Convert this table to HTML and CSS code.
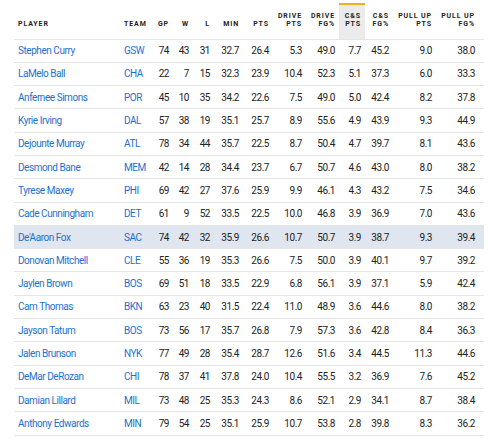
FILE: index.html
```html
<!DOCTYPE html>
<html lang="en">
<head>
    <meta charset="UTF-8">
    <meta name="viewport" content="width=device-width, initial-scale=1.0">
    <title>Shooting Splits</title>
    <link rel="stylesheet" href="styles.css">
</head>
<body>
    <div class="container">
        <table class="stats-table">
            <colgroup>
                <col class="c-player"><col class="c-team"><col class="c-gp"><col class="c-w"><col class="c-l">
                <col class="c-min"><col class="c-pts"><col class="c-dpts"><col class="c-dfg"><col class="c-cpts">
                <col class="c-cfg"><col class="c-pupts"><col class="c-pufg">
            </colgroup>
            <thead>
                <tr>
                    <th class="left">Player</th>
                    <th class="left">Team</th>
                    <th>GP</th>
                    <th>W</th>
                    <th>L</th>
                    <th>Min</th>
                    <th>Pts</th>
                    <th>Drive<br>Pts</th>
                    <th>Drive<br>FG%</th>
                    <th class="sorted">C&amp;S<br>Pts</th>
                    <th>C&amp;S<br>FG%</th>
                    <th>Pull Up<br>Pts</th>
                    <th>Pull Up<br>FG%</th>
                </tr>
            </thead>
            <tbody id="rows"></tbody>
        </table>
    </div>

    <script>
        const players = [
            ['Stephen Curry', 'GSW', 74, 43, 31, '32.7', '26.4', '5.3', '49.0', '7.7', '45.2', '9.0', '38.0'],
            ['LaMelo Ball', 'CHA', 22, 7, 15, '32.3', '23.9', '10.4', '52.3', '5.1', '37.3', '6.0', '33.3'],
            ['Anfernee Simons', 'POR', 45, 10, 35, '34.2', '22.6', '7.5', '49.0', '5.0', '42.4', '8.2', '37.8'],
            ['Kyrie Irving', 'DAL', 57, 38, 19, '35.1', '25.7', '8.9', '55.6', '4.9', '43.9', '9.3', '44.9'],
            ['Dejounte Murray', 'ATL', 78, 34, 44, '35.7', '22.5', '8.7', '50.4', '4.7', '39.7', '8.1', '43.6'],
            ['Desmond Bane', 'MEM', 42, 14, 28, '34.4', '23.7', '6.7', '50.7', '4.6', '43.0', '8.0', '38.2'],
            ['Tyrese Maxey', 'PHI', 69, 42, 27, '37.6', '25.9', '9.9', '46.1', '4.3', '43.2', '7.5', '34.6'],
            ['Cade Cunningham', 'DET', 61, 9, 52, '33.5', '22.5', '10.0', '46.8', '3.9', '36.9', '7.0', '43.6'],
            ['De\'Aaron Fox', 'SAC', 74, 42, 32, '35.9', '26.6', '10.7', '50.7', '3.9', '38.7', '9.3', '39.4'],
            ['Donovan Mitchell', 'CLE', 55, 36, 19, '35.3', '26.6', '7.5', '50.0', '3.9', '40.1', '9.7', '39.2'],
            ['Jaylen Brown', 'BOS', 69, 51, 18, '33.5', '22.9', '6.8', '56.1', '3.9', '37.1', '5.9', '42.4'],
            ['Cam Thomas', 'BKN', 63, 23, 40, '31.5', '22.4', '11.0', '48.9', '3.6', '44.6', '8.0', '38.2'],
            ['Jayson Tatum', 'BOS', 73, 56, 17, '35.7', '26.8', '7.9', '57.3', '3.6', '42.8', '8.4', '36.3'],
            ['Jalen Brunson', 'NYK', 77, 49, 28, '35.4', '28.7', '12.6', '51.6', '3.4', '44.5', '11.3', '44.6'],
            ['DeMar DeRozan', 'CHI', 78, 37, 41, '37.8', '24.0', '10.4', '55.5', '3.2', '36.9', '7.6', '45.2'],
            ['Damian Lillard', 'MIL', 73, 48, 25, '35.3', '24.3', '8.6', '52.1', '2.9', '34.1', '8.7', '38.4'],
            ['Anthony Edwards', 'MIN', 79, 54, 25, '35.1', '25.9', '10.7', '53.8', '2.8', '39.8', '8.3', '36.2']
        ];

        const tbody = document.getElementById('rows');
        players.forEach(p => {
            const tr = document.createElement('tr');
            if (p[0] === 'De\'Aaron Fox') tr.className = 'highlight';
            p.forEach((val, i) => {
                const td = document.createElement('td');
                if (i < 2) {
                    td.className = 'left';
                    td.innerHTML = `<a href="#">${val}</a>`;
                } else {
                    td.textContent = val;
                }
                tr.appendChild(td);
            });
            tbody.appendChild(tr);
        });
    </script>
</body>
</html>
```

FILE: styles.css
```css
body {
    margin: 0;
    background: #fff;
    font-family: "Roboto", "Liberation Sans", sans-serif;
    color: #222;
}
.container {
    padding: 3px 5px 0 14px;
}
.stats-table {
    width: 470px;
    table-layout: fixed;
    border-collapse: collapse;
}
.c-player { width: 106px; }
.c-team { width: 30px; }
.c-gp { width: 23px; }
.c-w { width: 20px; }
.c-l { width: 21px; }
.c-min { width: 29px; }
.c-pts { width: 30px; }
.c-dpts { width: 33px; }
.c-dfg { width: 33px; }
.c-cpts { width: 26px; }
.c-cfg { width: 28px; }
.c-pupts { width: 43px; }
.c-pufg { width: 48px; }

.stats-table th {
    height: 35px;
    box-sizing: border-box;
    padding: 0 4px 11px 0;
    vertical-align: bottom;
    text-align: right;
    font-size: 7px;
    line-height: 8px;
    font-weight: 700;
    letter-spacing: 0.9px;
    text-transform: uppercase;
    color: #222;
    border-bottom: 1px solid #e4e4e4;
    border-top: 2px solid transparent;
}
.stats-table th.sorted {
    background: #ebebeb;
    border-top: 2px solid #f2b01e;
    background-clip: padding-box;
}
.stats-table td {
    height: 23.3px;
    box-sizing: border-box;
    padding: 0 4px 0 0;
    text-align: right;
    font-size: 10px;
    letter-spacing: -0.45px;
    border-bottom: 1px solid #e4e4e4;
    white-space: nowrap;
}
.stats-table .left {
    text-align: left;
    padding-left: 4px;
}
.stats-table th:last-child,
.stats-table td:last-child {
    padding-right: 9px;
}
.stats-table a {
    color: #1e6fd0;
    text-decoration: none;
}
.stats-table tr.highlight td {
    background: #dfe6ef;
}
```
